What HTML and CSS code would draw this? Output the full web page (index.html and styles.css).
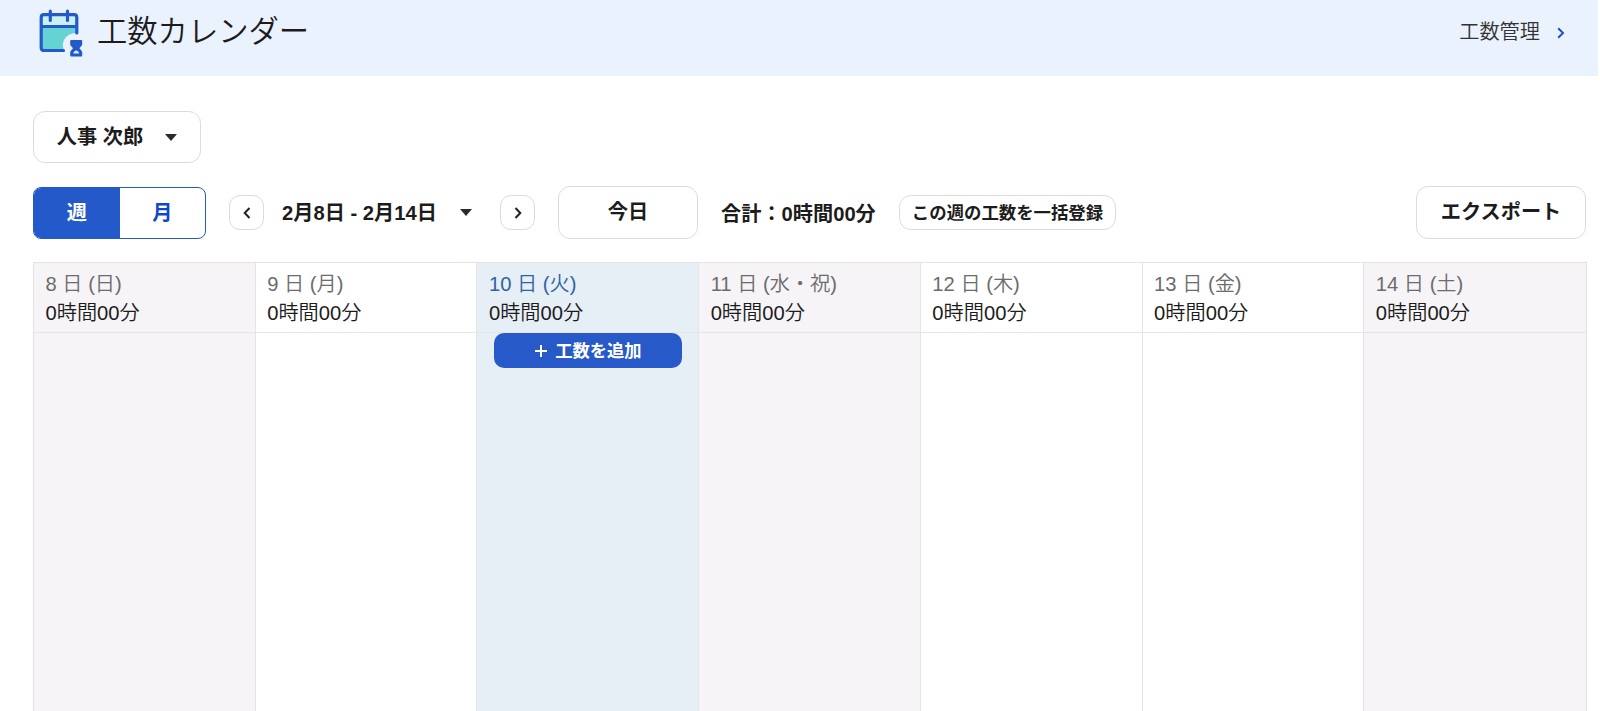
FILE: index.html
```html
<!DOCTYPE html>
<html lang="ja">
<head>
<meta charset="utf-8">
<title>工数カレンダー</title>
<link rel="stylesheet" href="styles.css">
</head>
<body>
<header class="page-header">
  <svg class="logo" width="46" height="50" viewBox="0 0 46 50" fill="none">
    <path d="M4 18V7q0-2 2-2h31q2 0 2 2v11z" fill="#caf0f2"/>
    <path d="M4 18h35v6c-9 0-15 6-14 14l1 4H6q-2 0-2-2z" fill="#65d3d4"/>
    <path d="M25.500 41.500H6q-2.800 0-2.800-2.800V8.500q0-2.800 2.800-2.800h30q2.800 0 2.800 2.800V24M3.200 17.500h35.600M12.300 2.200v9.300M29.500 2.200v9.300" stroke="#2459c9" stroke-width="3.200" stroke-linecap="round"/>
    <path d="M33.200 32h10v3.500l-3 3.500 3 4v3.500h-10V43l3-4-3-3.500z" fill="#2459c9" stroke="#2459c9" stroke-width="2" stroke-linejoin="round"/>
    <path d="M35.200 44.500q0-2 3-3.200 3 1.200 3 3.200z" fill="#caf0f2"/>
  </svg>
  <h1 class="title">工数カレンダー</h1>
  <a class="manage">工数管理
    <svg width="8" height="12" viewBox="0 0 8 12" fill="none"><path d="M1.200 1.200 6 6l-4.800 4.800" stroke="#1f4fd0" stroke-width="2"/></svg>
  </a>
</header>
<main class="content">
  <button class="btn person">人事 次郎<i class="caret"></i></button>
  <div class="toolbar">
    <div class="toggle"><span class="tab active">週</span><span class="tab">月</span></div>
    <button class="btn step prev"><svg width="8" height="12" viewBox="0 0 8 12" fill="none"><path d="M6.500 1 1.700 6l4.800 5" stroke="#222" stroke-width="2"/></svg></button>
    <div class="range">2月8日 - 2月14日<i class="caret"></i></div>
    <button class="btn step next"><svg width="8" height="12" viewBox="0 0 8 12" fill="none"><path d="m1.500 1 4.800 5-4.800 5" stroke="#222" stroke-width="2"/></svg></button>
    <button class="btn today">今日</button>
    <div class="total">合計：0時間00分</div>
    <button class="btn bulk">この週の工数を一括登録</button>
    <button class="btn export">エクスポート</button>
  </div>
  <div class="calendar">
    <section class="day off"><div class="head"><div class="date">8 日 (日)</div><div>0時間00分</div></div></section>
    <section class="day"><div class="head"><div class="date">9 日 (月)</div><div>0時間00分</div></div></section>
    <section class="day current"><div class="head"><div class="date">10 日 (火)</div><div>0時間00分</div></div>
      <button class="add"><svg width="12" height="12" viewBox="0 0 12 12"><path d="M6 0v12M0 6h12" stroke="#fff" stroke-width="2"/></svg>工数を追加</button></section>
    <section class="day off"><div class="head"><div class="date">11 日 (水・祝)</div><div>0時間00分</div></div></section>
    <section class="day"><div class="head"><div class="date">12 日 (木)</div><div>0時間00分</div></div></section>
    <section class="day"><div class="head"><div class="date">13 日 (金)</div><div>0時間00分</div></div></section>
    <section class="day off"><div class="head"><div class="date">14 日 (土)</div><div>0時間00分</div></div></section>
  </div>
</main>
</body>
</html>
```

FILE: styles.css
```css
* { box-sizing: border-box; }
body {
  margin: 0;
  height: 711px;
  overflow: hidden;
  display: flex;
  flex-direction: column;
  background: #fff;
  color: #1c1c1c;
  font: 350 20.200px/28px "Liberation Sans", "Noto Sans CJK JP", sans-serif;
}
button { font: inherit; color: inherit; padding: 0; }
.page-header {
  height: 76px;
  flex: none;
  margin-right: 2px;
  padding: 0 33px 0 38px;
  display: flex;
  align-items: flex-start;
  background: #eaf2fe;
}
.logo { margin-top: 9px; flex: none; }
.title { margin: 10px 0 0 13px; font-size: 30.300px; line-height: 44px; font-weight: 350; }
.manage { margin: 18px 0 0 auto; display: flex; align-items: center; gap: 17px; color: #333; }
.manage svg { margin-top: 2px; }
.content { flex: 1; display: flex; flex-direction: column; padding: 35px 14px 0 33px; }
.btn {
  flex: none;
  display: flex;
  align-items: center;
  justify-content: center;
  background: #fff;
  border: 1px solid #dcdcdc;
  border-radius: 12px;
  font-weight: 600;
  white-space: nowrap;
}
.caret {
  width: 0;
  height: 0;
  border: 6px solid transparent;
  border-top: 7px solid #2b2b2b;
  border-bottom: 0;
}
.person { width: 168px; height: 52px; gap: 22px; }
.toolbar { margin-top: 23px; height: 53px; display: flex; align-items: center; }
.toggle {
  width: 173px;
  height: 52px;
  flex: none;
  display: flex;
  border: 1px solid #2459c9;
  border-radius: 8px;
  overflow: hidden;
}
.tab { flex: 1; display: flex; align-items: center; justify-content: center; font-weight: 700; color: #0f48cc; }
.active { background: #2459c9; color: #fff; }
.step { width: 35px; height: 35px; border-radius: 11px; }
.prev { margin-left: 23px; }
.range { margin-left: 18px; width: 190px; display: flex; align-items: center; justify-content: space-between; font-weight: 600; white-space: nowrap; }
.next { margin-left: 28px; }
.today { width: 140px; height: 53px; margin-left: 23px; padding-bottom: 2px; }
.total { margin-left: 23px; width: 156px; font-weight: 600; white-space: nowrap; padding-top: 2px; }
.bulk { width: 217px; height: 35px; margin-left: 22px; font-size: 17.400px; }
.export { width: 170px; height: 53px; margin-left: auto; padding-bottom: 2px; }
.calendar {
  flex: 1;
  margin-top: 23px;
  margin-right: -1px;
  display: grid;
  grid-template-columns: repeat(7, 1fr);
  border: 1px solid #e4e2e3;
  border-bottom: 0;
}
.day { border-right: 1px solid #e8e4e6; }
.day:last-child { border-right: 0; }
.head { height: 70px; padding: 7px 0 0 11.500px; border-bottom: 1px solid #e8e4e6; line-height: 29px; }
.date { color: #6c6c6c; }
.off { background: #f6f4f6; }
.current { background: #e6eef6; }
.current .date { color: #2f63a3; }
.add {
  width: 188px;
  height: 35px;
  margin: 0 0 0 17px;
  display: flex;
  align-items: center;
  justify-content: center;
  gap: 8px;
  border: 0;
  border-radius: 10px;
  background: #275ac8;
  color: #fff;
  font-size: 17.300px;
  font-weight: 700;
}
```
